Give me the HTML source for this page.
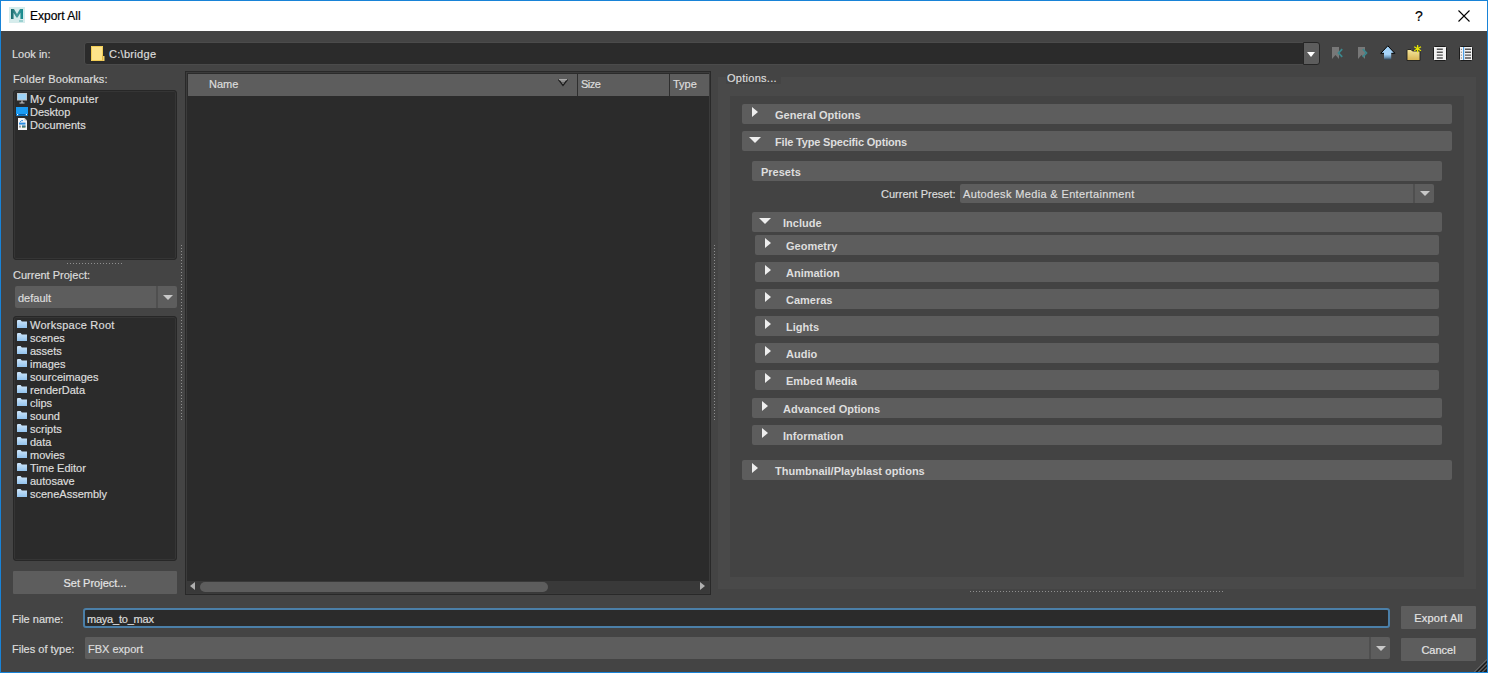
<!DOCTYPE html>
<html><head><meta charset="utf-8"><style>
*{box-sizing:border-box;margin:0;padding:0}
html,body{width:1488px;height:673px;overflow:hidden;background:#444444}
body{position:relative;font-family:"Liberation Sans",sans-serif;font-size:11px;color:#dcdcdc}
.a{position:absolute}
.t{position:absolute;white-space:pre;line-height:13px;height:13px;-webkit-text-stroke:0.2px currentColor}
.b{-webkit-text-stroke:0}
.b{font-weight:bold;color:#dedede}
.fld{position:absolute;background:#2b2b2b;border-radius:2px}
.hdr{position:absolute;background:#5d5d5d;border-radius:2px;height:20px}
.tr{position:absolute;width:0;height:0;border-top:5.5px solid transparent;border-bottom:5.5px solid transparent;border-left:6px solid #eeeeee}
.td{position:absolute;width:0;height:0;border-left:6px solid transparent;border-right:6px solid transparent;border-top:6px solid #eeeeee}
.ar{position:absolute;width:0;height:0;border-left:5px solid transparent;border-right:5px solid transparent;border-top:5px solid #c8c8c8}
.lst{position:absolute;background:#2b2b2b;border:1px solid #272727;border-radius:3px;box-shadow:inset 0 0 0 1px #353535}
.dv{position:absolute;width:1px;background-image:linear-gradient(#8f8f8f 33.3%,transparent 33.3%);background-size:1px 3px}
.dh{position:absolute;height:1px;background-image:linear-gradient(90deg,#8f8f8f 33.3%,transparent 33.3%);background-size:3px 1px}
</style></head><body>
<div class="a" style="left:0px;top:0px;width:1488px;height:673px;background:#1883d7;"></div>
<div class="a" style="left:1px;top:1px;width:1486px;height:671px;background:#444444;"></div>
<div class="a" style="left:1px;top:1px;width:1486px;height:30px;background:#ffffff;"></div>
<svg class="a" style="left:9px;top:7px" width="16" height="16" viewBox="0 0 16 16"><defs><linearGradient id="mg" x1="0" y1="0" x2="1" y2="0"><stop offset="0" stop-color="#16696c"/><stop offset="0.5" stop-color="#4a9a9c"/><stop offset="1" stop-color="#13898c"/></linearGradient></defs><rect width="16" height="16" fill="#d6ecec"/><path d="M2 12V2h3l3 5 3-5h3v10h-2.6V5.8L8.6 10.5H7.4L4.6 5.8V12z" fill="url(#mg)"/><path d="M10 14h4" stroke="#5fb4b4" stroke-width="1"/></svg>
<div class="t" style="left:30px;top:9px;font-size:12px;line-height:14px;color:#000">Export All</div>
<div class="t" style="left:1415px;top:8px;font-size:14px;line-height:16px;color:#000">?</div>
<svg class="a" style="left:1458px;top:10px" width="12" height="12" viewBox="0 0 12 12"><path d="M0.5 0.5L11.5 11.5M11.5 0.5L0.5 11.5" stroke="#000" stroke-width="1.1"/></svg>
<div class="t " style="left:12px;top:48px;">Look in:</div>
<div class="a" style="left:84px;top:42px;width:1235px;height:23px;background:#2b2b2b;border:1px solid #4b4b4b;border-radius:3px"></div>
<div class="a" style="left:1303px;top:42px;width:17px;height:23px;background:#5d5d5d;border:1px solid #262626;border-radius:0 3px 3px 0"></div>
<div class="ar" style="left:1307px;top:52px;border-top-color:#fff;border-left-width:4px;border-right-width:4px"></div>
<svg class="a" style="left:91px;top:46px" width="14" height="16" viewBox="0 0 14 16"><path d="M0 0h12v10h1v5H0z" fill="#fde38a"/><path d="M0.5 0.5h11v14H0.5z" fill="none" stroke="#f2cd55" stroke-width="1"/><path d="M11 10h2.5v5H11z" fill="#f5d36a"/><path d="M11.5 9.5v5" stroke="#e0b840" stroke-width="1"/></svg>
<div class="t " style="left:109px;top:48px;letter-spacing:0.3px">C:\bridge</div>

<svg class="a" style="left:1331px;top:46px" width="13" height="14" viewBox="0 0 13 14"><path d="M1 1h7v12l-3.5-4-3.5 4z" fill="#787878"/><path d="M11.2 3.2L7.6 7l3.6 3.8" stroke="#3c878d" stroke-width="1.8" fill="none"/></svg>
<svg class="a" style="left:1357px;top:46px" width="13" height="14" viewBox="0 0 13 14"><path d="M1 1h7v12l-3.5-4-3.5 4z" fill="#787878"/><path d="M5.8 3.2L9.4 7l-3.6 3.8" stroke="#3c878d" stroke-width="1.8" fill="none"/></svg>
<svg class="a" style="left:1380px;top:45px" width="16" height="16" viewBox="0 0 16 16"><defs><linearGradient id="ug" x1="0" y1="0" x2="0" y2="1"><stop offset="0" stop-color="#9fd0f6"/><stop offset="0.6" stop-color="#a8d6fb"/><stop offset="0.8" stop-color="#6f9cc0"/><stop offset="1" stop-color="#303a44"/></linearGradient></defs><path d="M7.8 0.8L0.8 8.3h3.2V15h7.2V8.3h3.4z" fill="url(#ug)"/><path d="M4 8.3H0.8L7.8 0.8l7 7.5h-3.4" stroke="#000" stroke-width="1" fill="none"/></svg>
<svg class="a" style="left:1406px;top:44px" width="16" height="18" viewBox="0 0 16 18"><defs><linearGradient id="fg" x1="0" y1="0" x2="0" y2="1"><stop offset="0" stop-color="#f6e8a0"/><stop offset="1" stop-color="#d8b452"/></linearGradient></defs><path d="M1 6.5q0-1 1-1h3l1.5 1.5H14v9.5H1z" fill="url(#fg)" stroke="#1e1e1e" stroke-width="0.9"/><path d="M11.6 1v7.5M8.2 2.8l6.8 3.9M15 2.8L8.2 6.7" stroke="#e6e600" stroke-width="1.3"/></svg>
<svg class="a" style="left:1433px;top:46px" width="14" height="15" viewBox="0 0 14 15"><rect x="0.5" y="0.5" width="13" height="14" rx="1" fill="#f2f2f2" stroke="#1c1c1c" stroke-width="1"/><path d="M3.8 3.3h6M3.8 6.2h6M3.8 9.1h6M3.8 12h6" stroke="#555" stroke-width="1.4"/></svg>
<svg class="a" style="left:1459px;top:46px" width="14" height="15" viewBox="0 0 14 15"><rect x="0.5" y="0.5" width="13" height="14" rx="1" fill="#f2f2f2" stroke="#1c1c1c" stroke-width="1"/><path d="M6 3.3h6M6 6.2h6M6 9.1h6M6 12h6" stroke="#555" stroke-width="1.4"/><path d="M4.6 1v13" stroke="#4aa0e8" stroke-width="1.2"/><path d="M2.4 2.8v1M2.4 5.7v1M2.4 8.6v1M2.4 11.5v1" stroke="#666" stroke-width="1"/></svg>

<div class="t " style="left:13px;top:73px;letter-spacing:0.14px">Folder Bookmarks:</div>
<div class="lst" style="left:13px;top:90px;width:164px;height:170px"></div>
<svg class="a" style="left:16px;top:92px" width="12" height="12" viewBox="0 0 12 12"><rect x="1" y="1" width="10" height="7.5" fill="#c4c4c4"/><rect x="1.8" y="1.8" width="8.4" height="5.8" fill="#9dd3f7"/><path d="M6 8.5v2.5M3.5 11h5" stroke="#c8c8c8" stroke-width="1.2"/></svg>
<svg class="a" style="left:16px;top:107px" width="12" height="9" viewBox="0 0 12 9"><rect width="12" height="9" fill="#1b9bf2"/><rect x="0" y="7" width="12" height="1.6" fill="#0b5fa6"/><rect x="1" y="7" width="1.2" height="1.2" fill="#fff"/><rect x="9.8" y="7" width="1.2" height="1.2" fill="#fff"/></svg>
<svg class="a" style="left:18px;top:118px" width="9" height="12" viewBox="0 0 9 12"><path d="M0 0h6.5L9 2.5V12H0z" fill="#f4f4f4"/><path d="M6.5 0v2.5H9" fill="#bbb"/><rect x="1" y="4.6" width="6.5" height="2" fill="#2a8ce0"/><path d="M2 4.2q1.5-2.5 3-1.5" stroke="#2a8ce0" stroke-width="1" fill="none"/><rect x="1" y="7.6" width="2" height="2" fill="#999"/><rect x="4" y="7.6" width="3.5" height="2" fill="#3b6e3b"/><rect x="4" y="7.6" width="3.5" height="0.9" fill="#3a7fd0"/></svg>
<div class="t " style="left:30px;top:93px;letter-spacing:0.25px">My Computer</div>
<div class="t " style="left:30px;top:106px;">Desktop</div>
<div class="t " style="left:30px;top:119px;">Documents</div>
<div class="dh" style="left:67px;top:263px;width:56px"></div>
<div class="t " style="left:13px;top:269px;">Current Project:</div>
<div class="a" style="left:15px;top:286px;width:162px;height:22px;background:#5d5d5d;border-radius:2px"></div>
<div class="a" style="left:156px;top:286px;width:2px;height:22px;background:#4f4f4f;"></div>
<div class="ar" style="left:163px;top:295px"></div>
<div class="t " style="left:18px;top:292px;">default</div>
<div class="lst" style="left:13px;top:316px;width:164px;height:245px"></div>
<svg class="a" style="left:17px;top:320px" width="10" height="8" viewBox="0 0 10 8"><defs><linearGradient id="pf0" x1="0" y1="0" x2="0" y2="1"><stop offset="0" stop-color="#cfe6fa"/><stop offset="1" stop-color="#94c4ee"/></linearGradient></defs><path d="M0 1q0-1 1-1h2.6l1.2 1.4H10V8H0z" fill="url(#pf0)"/></svg>
<div class="t " style="left:30px;top:319px;letter-spacing:0.25px">Workspace Root</div>
<svg class="a" style="left:17px;top:333px" width="10" height="8" viewBox="0 0 10 8"><defs><linearGradient id="pf1" x1="0" y1="0" x2="0" y2="1"><stop offset="0" stop-color="#cfe6fa"/><stop offset="1" stop-color="#94c4ee"/></linearGradient></defs><path d="M0 1q0-1 1-1h2.6l1.2 1.4H10V8H0z" fill="url(#pf1)"/></svg>
<div class="t " style="left:30px;top:332px;">scenes</div>
<svg class="a" style="left:17px;top:346px" width="10" height="8" viewBox="0 0 10 8"><defs><linearGradient id="pf2" x1="0" y1="0" x2="0" y2="1"><stop offset="0" stop-color="#cfe6fa"/><stop offset="1" stop-color="#94c4ee"/></linearGradient></defs><path d="M0 1q0-1 1-1h2.6l1.2 1.4H10V8H0z" fill="url(#pf2)"/></svg>
<div class="t " style="left:30px;top:345px;">assets</div>
<svg class="a" style="left:17px;top:359px" width="10" height="8" viewBox="0 0 10 8"><defs><linearGradient id="pf3" x1="0" y1="0" x2="0" y2="1"><stop offset="0" stop-color="#cfe6fa"/><stop offset="1" stop-color="#94c4ee"/></linearGradient></defs><path d="M0 1q0-1 1-1h2.6l1.2 1.4H10V8H0z" fill="url(#pf3)"/></svg>
<div class="t " style="left:30px;top:358px;">images</div>
<svg class="a" style="left:17px;top:372px" width="10" height="8" viewBox="0 0 10 8"><defs><linearGradient id="pf4" x1="0" y1="0" x2="0" y2="1"><stop offset="0" stop-color="#cfe6fa"/><stop offset="1" stop-color="#94c4ee"/></linearGradient></defs><path d="M0 1q0-1 1-1h2.6l1.2 1.4H10V8H0z" fill="url(#pf4)"/></svg>
<div class="t " style="left:30px;top:371px;">sourceimages</div>
<svg class="a" style="left:17px;top:385px" width="10" height="8" viewBox="0 0 10 8"><defs><linearGradient id="pf5" x1="0" y1="0" x2="0" y2="1"><stop offset="0" stop-color="#cfe6fa"/><stop offset="1" stop-color="#94c4ee"/></linearGradient></defs><path d="M0 1q0-1 1-1h2.6l1.2 1.4H10V8H0z" fill="url(#pf5)"/></svg>
<div class="t " style="left:30px;top:384px;">renderData</div>
<svg class="a" style="left:17px;top:398px" width="10" height="8" viewBox="0 0 10 8"><defs><linearGradient id="pf6" x1="0" y1="0" x2="0" y2="1"><stop offset="0" stop-color="#cfe6fa"/><stop offset="1" stop-color="#94c4ee"/></linearGradient></defs><path d="M0 1q0-1 1-1h2.6l1.2 1.4H10V8H0z" fill="url(#pf6)"/></svg>
<div class="t " style="left:30px;top:397px;">clips</div>
<svg class="a" style="left:17px;top:411px" width="10" height="8" viewBox="0 0 10 8"><defs><linearGradient id="pf7" x1="0" y1="0" x2="0" y2="1"><stop offset="0" stop-color="#cfe6fa"/><stop offset="1" stop-color="#94c4ee"/></linearGradient></defs><path d="M0 1q0-1 1-1h2.6l1.2 1.4H10V8H0z" fill="url(#pf7)"/></svg>
<div class="t " style="left:30px;top:410px;">sound</div>
<svg class="a" style="left:17px;top:424px" width="10" height="8" viewBox="0 0 10 8"><defs><linearGradient id="pf8" x1="0" y1="0" x2="0" y2="1"><stop offset="0" stop-color="#cfe6fa"/><stop offset="1" stop-color="#94c4ee"/></linearGradient></defs><path d="M0 1q0-1 1-1h2.6l1.2 1.4H10V8H0z" fill="url(#pf8)"/></svg>
<div class="t " style="left:30px;top:423px;">scripts</div>
<svg class="a" style="left:17px;top:437px" width="10" height="8" viewBox="0 0 10 8"><defs><linearGradient id="pf9" x1="0" y1="0" x2="0" y2="1"><stop offset="0" stop-color="#cfe6fa"/><stop offset="1" stop-color="#94c4ee"/></linearGradient></defs><path d="M0 1q0-1 1-1h2.6l1.2 1.4H10V8H0z" fill="url(#pf9)"/></svg>
<div class="t " style="left:30px;top:436px;">data</div>
<svg class="a" style="left:17px;top:450px" width="10" height="8" viewBox="0 0 10 8"><defs><linearGradient id="pf10" x1="0" y1="0" x2="0" y2="1"><stop offset="0" stop-color="#cfe6fa"/><stop offset="1" stop-color="#94c4ee"/></linearGradient></defs><path d="M0 1q0-1 1-1h2.6l1.2 1.4H10V8H0z" fill="url(#pf10)"/></svg>
<div class="t " style="left:30px;top:449px;">movies</div>
<svg class="a" style="left:17px;top:463px" width="10" height="8" viewBox="0 0 10 8"><defs><linearGradient id="pf11" x1="0" y1="0" x2="0" y2="1"><stop offset="0" stop-color="#cfe6fa"/><stop offset="1" stop-color="#94c4ee"/></linearGradient></defs><path d="M0 1q0-1 1-1h2.6l1.2 1.4H10V8H0z" fill="url(#pf11)"/></svg>
<div class="t " style="left:30px;top:462px;">Time Editor</div>
<svg class="a" style="left:17px;top:476px" width="10" height="8" viewBox="0 0 10 8"><defs><linearGradient id="pf12" x1="0" y1="0" x2="0" y2="1"><stop offset="0" stop-color="#cfe6fa"/><stop offset="1" stop-color="#94c4ee"/></linearGradient></defs><path d="M0 1q0-1 1-1h2.6l1.2 1.4H10V8H0z" fill="url(#pf12)"/></svg>
<div class="t " style="left:30px;top:475px;">autosave</div>
<svg class="a" style="left:17px;top:489px" width="10" height="8" viewBox="0 0 10 8"><defs><linearGradient id="pf13" x1="0" y1="0" x2="0" y2="1"><stop offset="0" stop-color="#cfe6fa"/><stop offset="1" stop-color="#94c4ee"/></linearGradient></defs><path d="M0 1q0-1 1-1h2.6l1.2 1.4H10V8H0z" fill="url(#pf13)"/></svg>
<div class="t " style="left:30px;top:488px;">sceneAssembly</div>
<div class="a" style="left:13px;top:571px;width:164px;height:23px;background:#5d5d5d;border-radius:1px"></div>
<div class="t" style="left:13px;top:577px;width:164px;text-align:center;color:#e4e4e4">Set Project...</div>
<div class="dv" style="left:181px;top:245px;height:175px"></div>
<div class="a" style="left:185px;top:71px;width:526px;height:524px;background:#292929;"></div>
<div class="a" style="left:186px;top:72px;width:524px;height:522px;background:#3b3b3b;"></div>
<div class="a" style="left:187px;top:73px;width:522px;height:520px;background:#2b2b2b;"></div>
<div class="a" style="left:188px;top:74px;width:521px;height:22px;background:#5d5d5d;"></div>
<div class="a" style="left:577px;top:74px;width:1px;height:22px;background:#2e2e2e;"></div>
<div class="a" style="left:669px;top:74px;width:1px;height:22px;background:#2e2e2e;"></div>
<div class="t " style="left:209px;top:78px;">Name</div>
<svg class="a" style="left:557px;top:78px" width="12" height="9" viewBox="0 0 12 9"><path d="M1.5 1.5L6 7.5L10.5 1.5" fill="#8e8e8e" stroke="#1c1c1c" stroke-width="1.3"/><path d="M2 1.6h8" stroke="#a8a8a8" stroke-width="1.2"/><path d="M5 4h2v1.5H5z" fill="#6a6a6a"/></svg>
<div class="t " style="left:581px;top:78px;letter-spacing:-0.5px">Size</div>
<div class="t " style="left:673px;top:78px;">Type</div>
<div class="a" style="left:187px;top:581px;width:522px;height:12px;background:#393939;"></div>
<div class="a" style="left:200px;top:582px;width:348px;height:10px;background:#5d5d5d;border-radius:5px"></div>
<div class="a" style="left:190px;top:582px;width:0;height:0;border-top:4px solid transparent;border-bottom:4px solid transparent;border-right:5px solid #b0b0b0"></div>
<div class="a" style="left:700px;top:582px;width:0;height:0;border-top:4.5px solid transparent;border-bottom:4.5px solid transparent;border-left:5px solid #b0b0b0"></div>
<div class="dv" style="left:714px;top:245px;height:175px"></div>
<div class="a" style="left:718px;top:77px;width:758px;height:512px;background:#494949;"></div>
<div class="a" style="left:726px;top:70px;width:55px;height:14px;background:#444444;"></div>
<div class="t " style="left:727px;top:72px;letter-spacing:0.27px">Options...</div>
<div class="a" style="left:730px;top:96px;width:734px;height:481px;background:#434343;"></div>
<div class="hdr" style="left:742px;top:104px;width:710px"></div>
<div class="tr" style="left:752px;top:107px"></div>
<div class="t b" style="left:775px;top:109px;">General Options</div>
<div class="hdr" style="left:742px;top:131px;width:710px"></div>
<div class="td" style="left:749px;top:137px"></div>
<div class="t b" style="left:775px;top:136px;letter-spacing:-0.18px">File Type Specific Options</div>
<div class="hdr" style="left:752px;top:161px;width:690px"></div>
<div class="t b" style="left:761px;top:166px;">Presets</div>
<div class="t " style="left:881px;top:188px;">Current Preset:</div>
<div class="a" style="left:960px;top:184px;width:474px;height:19px;background:#5d5d5d;border-radius:2px"></div>
<div class="a" style="left:1413px;top:184px;width:2px;height:19px;background:#4f4f4f;"></div>
<div class="ar" style="left:1420px;top:191px"></div>
<div class="t " style="left:963px;top:188px;letter-spacing:0.36px">Autodesk Media &amp; Entertainment</div>
<div class="hdr" style="left:752px;top:212px;width:690px"></div>
<div class="td" style="left:759px;top:218px"></div>
<div class="t b" style="left:783px;top:217px;">Include</div>
<div class="hdr" style="left:755px;top:235px;width:684px"></div>
<div class="tr" style="left:765px;top:238px"></div>
<div class="t b" style="left:786px;top:240px;">Geometry</div>
<div class="hdr" style="left:755px;top:262px;width:684px"></div>
<div class="tr" style="left:765px;top:265px"></div>
<div class="t b" style="left:786px;top:267px;">Animation</div>
<div class="hdr" style="left:755px;top:289px;width:684px"></div>
<div class="tr" style="left:765px;top:292px"></div>
<div class="t b" style="left:786px;top:294px;">Cameras</div>
<div class="hdr" style="left:755px;top:316px;width:684px"></div>
<div class="tr" style="left:765px;top:319px"></div>
<div class="t b" style="left:786px;top:321px;">Lights</div>
<div class="hdr" style="left:755px;top:343px;width:684px"></div>
<div class="tr" style="left:765px;top:346px"></div>
<div class="t b" style="left:786px;top:348px;">Audio</div>
<div class="hdr" style="left:755px;top:370px;width:684px"></div>
<div class="tr" style="left:765px;top:373px"></div>
<div class="t b" style="left:786px;top:375px;">Embed Media</div>
<div class="hdr" style="left:752px;top:398px;width:690px"></div>
<div class="tr" style="left:762px;top:401px"></div>
<div class="t b" style="left:783px;top:403px;">Advanced Options</div>
<div class="hdr" style="left:752px;top:425px;width:690px"></div>
<div class="tr" style="left:762px;top:428px"></div>
<div class="t b" style="left:783px;top:430px;">Information</div>
<div class="hdr" style="left:742px;top:460px;width:710px"></div>
<div class="tr" style="left:752px;top:463px"></div>
<div class="t b" style="left:775px;top:465px;">Thumbnail/Playblast options</div>
<div class="dh" style="left:970px;top:591px;width:254px"></div>
<div class="t " style="left:12px;top:613px;">File name:</div>
<div class="a" style="left:83px;top:608px;width:1307px;height:20px;background:#2b2b2b;border:2px solid #4b7fa8;border-radius:3px"></div>
<div class="t " style="left:87px;top:613px;letter-spacing:-0.22px">maya_to_max</div>
<div class="t " style="left:12px;top:643px;">Files of type:</div>
<div class="a" style="left:85px;top:637px;width:305px;height:22px;background:#5d5d5d;border-radius:2px"></div>
<div class="a" style="left:85px;top:637px;width:1305px;height:22px;background:#5d5d5d;border-radius:2px"></div>
<div class="a" style="left:1369px;top:637px;width:2px;height:22px;background:#4f4f4f;"></div>
<div class="ar" style="left:1376px;top:646px"></div>
<div class="t " style="left:88px;top:643px;">FBX export</div>
<div class="a" style="left:1401px;top:606px;width:75px;height:23px;background:#5d5d5d;border-radius:1px"></div>
<div class="t" style="left:1401px;top:612px;width:75px;text-align:center;letter-spacing:0.2px;color:#e4e4e4">Export All</div>
<div class="a" style="left:1401px;top:638px;width:75px;height:23px;background:#5d5d5d;border-radius:1px"></div>
<div class="t" style="left:1401px;top:644px;width:75px;text-align:center;color:#e4e4e4">Cancel</div>
<svg class="a" style="left:1474px;top:659px" width="13" height="13" viewBox="0 0 13 13"><path d="M13 0V13H0z" fill="#1f1f1f"/><path d="M13.3 0.2L0.2 13.3M13.3 4.2L4.2 13.3M13.3 8.2L8.2 13.3" stroke="#9a9a9a" stroke-width="0.9"/></svg>
</body></html>
